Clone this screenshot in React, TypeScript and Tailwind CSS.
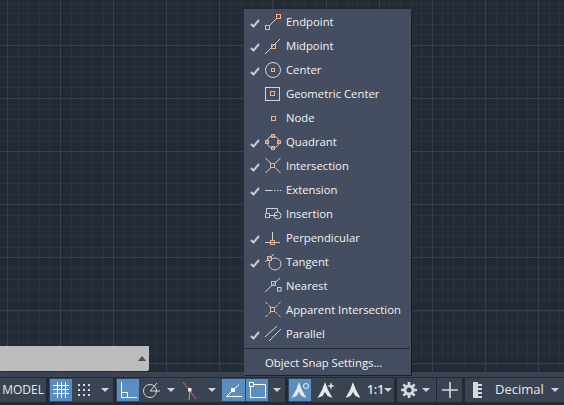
import React from "react";

const P = "#f6b183";
const W = "#d0d4d9";

function Sq({ x, y, s = 4, c = P }: { x: number; y: number; s?: number; c?: string }) {
  return <rect x={x} y={y} width={s} height={s} fill="none" stroke={c} strokeWidth="1" />;
}

const icons: Record<string, React.ReactNode> = {
  Endpoint: (<><path d="M5 15L13 7" stroke={W} /><Sq x={1.5} y={14.5} /><Sq x={12.5} y={3.5} /></>),
  Midpoint: (<><path d="M1 19L16 4" stroke={W} /><Sq x={7.5} y={9.5} /></>),
  Center: (<><circle cx="9" cy="11" r="7.5" fill="none" stroke={W} /><Sq x={7.5} y={9.5} s={3} /></>),
  "Geometric Center": (<><rect x="1.5" y="4.5" width="14" height="13" fill="none" stroke={W} /><Sq x={6.5} y={8.5} /></>),
  Node: (<Sq x={7.5} y={9.5} />),
  Quadrant: (<><circle cx="9" cy="11" r="6" fill="none" stroke={W} /><Sq x={7.5} y={3.5} s={3} /><Sq x={7.5} y={15.5} s={3} /><Sq x={1.5} y={9.5} s={3} /><Sq x={13.5} y={9.5} s={3} /></>),
  Intersection: (<><path d="M1.5 3L7 8.5M16.5 3L11 8.5M1.5 18L7 12.5M16.5 18L11 12.5" stroke={W} /><Sq x={6.5} y={8.5} /></>),
  Extension: (<path d="M1 11.5H8.5M10 11.5H11.5M13 11.5H14.5M16 11.5H17.5" stroke={W} />),
  Insertion: (<><path d="M2.5 10V5.5H13.5V9" stroke={W} fill="none" /><Sq x={1.5} y={10.5} /><path d="M6 12.5H13.5" stroke={W} /><circle cx="13.5" cy="12.5" r="3.5" fill="none" stroke={W} /></>),
  Perpendicular: (<><path d="M1 15.5H16M8.5 5V13" stroke={W} /><Sq x={6.5} y={13.5} /></>),
  Tangent: (<><circle cx="11" cy="13" r="6" fill="none" stroke={W} /><path d="M1 11L10 3" stroke={W} /><Sq x={3.5} y={5.5} /></>),
  Nearest: (<><path d="M1 17L16 3" stroke={W} /><Sq x={7.5} y={6.5} /><Sq x={13.5} y={12.5} s={3.5} c={W} /></>),
  "Apparent Intersection": (<><path d="M1.5 3L7 8.5M16.5 3L11 8.5M1.5 18L7 12.5M16.5 18L11 12.5" stroke={W} strokeDasharray="3 1.5" /><Sq x={6.5} y={8.5} /></>),
  Parallel: (<path d="M1 14L13 3M5 18L17 6" stroke={W} />),
};

const items: [string, boolean][] = [
  ["Endpoint", true], ["Midpoint", true], ["Center", true], ["Geometric Center", false], ["Node", false],
  ["Quadrant", true], ["Intersection", true], ["Extension", true], ["Insertion", false], ["Perpendicular", true],
  ["Tangent", true], ["Nearest", false], ["Apparent Intersection", false], ["Parallel", true],
];

function Caret() {
  return <span className="block w-0 h-0 border-l-[4px] border-r-[4px] border-t-[4px] border-l-transparent border-r-transparent border-t-[#cfd3d8]" />;
}

function Btn({ on, w = 22, children }: { on?: boolean; w?: number; children: React.ReactNode }) {
  return (
    <span style={{ width: w }} className={`h-[22px] flex items-center justify-center shrink-0 ${on ? "bg-[#5a8dc0]" : ""}`}>
      {children}
    </span>
  );
}

function Group({ w, children, className = "" }: { w: number; children: React.ReactNode; className?: string }) {
  return (
    <div style={{ width: w }} className={`h-[24px] bg-[#3a4351] flex items-center shrink-0 ${className}`}>
      {children}
    </div>
  );
}

function Arrow({ w = 14 }: { w?: number }) {
  return <span style={{ width: w }} className="h-[22px] flex items-center justify-center shrink-0"><Caret /></span>;
}

function Anno({ kind }: { kind: number }) {
  return (
    <svg width="20" height="20" viewBox="0 0 20 20">
      <path d="M9 2L12 10L16.5 18L11.5 16L9 12L6.5 16L1.5 18L6 10Z" fill="#e6e8ea" />
      {kind === 0 && <circle cx="16" cy="6" r="2.5" fill="none" stroke="#f0f2f4" strokeWidth="1" />}
      {kind === 1 && <path d="M15 2L16 5L19 6L16 7L15 10L14 7L11 6L14 5Z" fill="#d5d8dc" />}
    </svg>
  );
}

const majorX = [7, 60, 113, 166, 219, 272, 326, 379, 432, 485, 538];
const majorY = [45, 98, 151, 204, 257, 310, 363];
const minorX = Array.from({ length: 54 }, (_, i) => Math.round(7 + (i - 1) * 10.62) + 0.5);
const minorY = Array.from({ length: 38 }, (_, i) => Math.round(45 + (i - 5) * 10.62) + 0.5);

export default function App() {
  return (
    <div className="relative w-[564px] h-[405px] overflow-hidden bg-[#222a33] font-['Open_Sans','Noto_Sans',sans-serif] text-[11.3px] text-[#e6e8ea]">
      <svg className="absolute inset-0" width="564" height="405">
        {minorX.map((x) => <path key={"a" + x} d={`M${x} 0V405`} stroke="#2a323d" />)}
        {minorY.map((y) => <path key={"b" + y} d={`M0 ${y}H564`} stroke="#2a323d" />)}
        {majorX.map((x) => <path key={"c" + x} d={`M${x + 0.5} 0V405`} stroke="#373e50" />)}
        {majorY.map((y) => <path key={"d" + y} d={`M0 ${y + 0.5}H564`} stroke="#373e50" />)}
      </svg>

      <div className="absolute inset-0 flex flex-col">
        <div className="flex-1" />
        {/* Layout tabs strip */}
        <div className="w-[149px] h-[25px] bg-[#bcbcbc] rounded-br-[2px] flex items-center justify-end pr-[3px] mb-[1px] shrink-0">
          <span className="block w-0 h-0 border-l-[4px] border-r-[4px] border-b-[5px] border-l-transparent border-r-transparent border-b-[#4a4f57]" />
        </div>

        {/* Status bar */}
        <div className="h-[33px] shrink-0 bg-[#232a35] flex flex-col">
          <div className="h-[5px] bg-[#3a4351]" />
          <div className="h-[1px]" />
          <div className="flex items-center gap-[3px] h-[24px]">
            <Group w={46} className="justify-end pr-[2px] text-[12px]"><span>MODEL</span></Group>
            <Group w={64} className="pl-[1px]">
              <Btn on>
                <svg width="16" height="16" viewBox="0 0 16 16"><path d="M4.5 0V16M8.5 0V16M12.5 0V16M0 3.5H16M0 7.5H16M0 11.5H16" stroke="#fff" /></svg>
              </Btn>
              <Btn w={24}>
                <svg width="14" height="14" viewBox="0 0 14 14" fill="#d5d8dc"><rect x="1" y="1" width="2" height="2"/><rect x="6" y="1" width="2" height="2"/><rect x="11" y="1" width="2" height="2"/><rect x="1" y="6" width="2" height="2"/><rect x="6" y="6" width="2" height="2"/><rect x="11" y="6" width="2" height="2"/><rect x="1" y="11" width="2" height="2"/><rect x="6" y="11" width="2" height="2"/><rect x="11" y="11" width="2" height="2"/></svg>
              </Btn>
              <Arrow w={17} />
            </Group>
            <Group w={169} className="pl-[1px]">
              <Btn on>
                <svg width="20" height="18" viewBox="0 0 20 18"><path d="M3.5 1V16.5H19M3.5 11.5H9.5V16.5" fill="none" stroke="#fff" /></svg>
              </Btn>
              <Btn w={25}>
                <svg width="20" height="18" viewBox="0 0 20 18"><circle cx="8" cy="10" r="6.5" fill="none" stroke="#d5d8dc" /><path d="M8 10L15 2M8 10H18" stroke="#d5d8dc" /></svg>
              </Btn>
              <Arrow w={13} />
              <Btn w={26}>
                <svg width="18" height="20" viewBox="0 0 18 20"><path d="M2 2L15 19" stroke="#d9626a" /><path d="M9 10L8 20" stroke="#6fc48a" /><rect x="7" y="8" width="3.5" height="3.5" fill="#e8e8e8" /></svg>
              </Btn>
              <Arrow w={17} />
              <span className="w-[2px] shrink-0" />
              <Btn w={23} on>
                <svg width="18" height="16" viewBox="0 0 18 16"><path d="M17 14.5H1.5L14 2.5" stroke="#fff" fill="none" /><rect x="6" y="6" width="4" height="4" fill="#fff" /></svg>
              </Btn>
              <span className="w-[1px] shrink-0" />
              <Btn on>
                <svg width="20" height="18" viewBox="0 0 20 18"><rect x="2.5" y="1.5" width="4" height="4" fill="none" stroke="#fff" /><path d="M7 3.5H18.5V16.5H3.5V6" fill="none" stroke="#fff" /></svg>
              </Btn>
              <Arrow w={17} />
            </Group>
            <Group w={106} className="pl-[1px]">
              <Btn on><Anno kind={0} /></Btn>
              <Btn w={29}><Anno kind={1} /></Btn>
              <Btn w={27}><Anno kind={2} /></Btn>
              <span className="w-[15px] text-center shrink-0 text-[12px] font-semibold">1:1</span>
              <Arrow w={12} />
            </Group>
            <Group w={39} className="pl-[4px]">
              <Btn w={16}>
                <svg width="16" height="16" viewBox="0 0 16 16"><circle cx="8" cy="8" r="4" fill="none" stroke="#d5d8dc" strokeWidth="3" /><path d="M8 0V3M8 13V16M0 8H3M13 8H16M2.3 2.3L4.4 4.4M11.6 11.6L13.7 13.7M13.7 2.3L11.6 4.4M4.4 11.6L2.3 13.7" stroke="#d5d8dc" strokeWidth="2.6" /></svg>
              </Btn>
              <Arrow w={17} />
            </Group>
            <div className="w-[1px] -ml-[3px]" />
            <Group w={25} className="justify-center -ml-[2px]">
              <svg width="16" height="16" viewBox="0 0 16 16"><path d="M8 0V16M0 8H16" stroke="#d5d8dc" strokeWidth="1.6" /></svg>
            </Group>
            <Group w={99} className="pl-[8px]">
              <svg width="9" height="16" viewBox="0 0 9 16"><path d="M0 0H5V2H9V4H5V6H9V8H5V10H9V12H5V14H9V16H0Z" fill="#d5d8dc" /></svg>
              <span className="ml-[13px] w-[44px] text-[13px] whitespace-nowrap">Decimal</span>
              <span className="ml-[12px]"><Caret /></span>
            </Group>
          </div>
        </div>
      </div>

      {/* Snap menu */}
      <div className="absolute left-[244px] top-[9px] w-[167px] h-[366px] bg-[#454e60] shadow-[1px_1px_0_#1a1f26]">
        <div className="pt-[1px]">
          {items.map(([label, checked]) => (
            <div key={label} className="h-[24px] flex items-center">
              <span className="w-[20px] flex justify-center pl-[2px] mt-[3px] shrink-0">
                {checked && (
                  <svg width="10" height="9" viewBox="0 0 10 9"><path d="M1 5L3.5 7.5L9 1" fill="none" stroke="#c8ccd1" strokeWidth="2" /></svg>
                )}
              </span>
              <svg className="shrink-0" width="20" height="22" viewBox="0 0 20 22" fill="none">{icons[label]}</svg>
              <span className="ml-[2px] whitespace-nowrap text-[#f0f2f4]">{label}</span>
            </div>
          ))}
        </div>
        <div className="mx-[1px] mt-[2px] h-px bg-[#262c36]" />
        <div className="h-[28px] flex items-center pl-[21px] text-[#f0f2f4]">Object Snap Settings...</div>
      </div>
    </div>
  );
}
